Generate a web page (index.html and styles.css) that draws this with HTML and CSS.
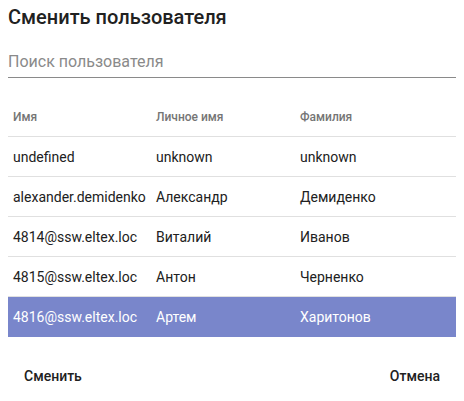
FILE: index.html
```html
<!DOCTYPE html>
<html lang="ru">
<head>
<meta charset="utf-8">
<link rel="stylesheet" href="styles.css">
</head>
<body>
<div class="dialog">
  <div class="content">
    <h1 class="title">Сменить пользователя</h1>
    <input class="search" type="text" placeholder="Поиск пользователя">
    <div class="table">
      <div class="row head"><div class="cell">Имя</div><div class="cell">Личное имя</div><div class="cell">Фамилия</div></div>
      <div class="row"><div class="cell">undefined</div><div class="cell">unknown</div><div class="cell">unknown</div></div>
      <div class="row"><div class="cell">alexander.demidenko</div><div class="cell">Александр</div><div class="cell">Демиденко</div></div>
      <div class="row"><div class="cell">4814@ssw.eltex.loc</div><div class="cell">Виталий</div><div class="cell">Иванов</div></div>
      <div class="row"><div class="cell">4815@ssw.eltex.loc</div><div class="cell">Антон</div><div class="cell">Черненко</div></div>
      <div class="row selected"><div class="cell">4816@ssw.eltex.loc</div><div class="cell">Артем</div><div class="cell">Харитонов</div></div>
    </div>
  </div>
  <div class="actions">
    <button class="btn" type="button">Сменить</button>
    <button class="btn" type="button">Отмена</button>
  </div>
</div>
</body>
</html>
```
FILE: styles.css
```css
html, body {
  margin: 0;
  padding: 0;
  background: #ffffff;
}
body {
  font-family: Roboto, "Noto Sans", sans-serif;
  color: #212121;
}
.dialog {
  width: 464px;
}
.content {
  padding: 5px 8px 0;
}
.title {
  margin: 0;
  font-size: 20px;
  line-height: 24px;
  font-weight: 500;
  color: #212121;
}
.search {
  display: block;
  box-sizing: content-box;
  width: 100%;
  height: 20px;
  margin: 19px 0 0;
  padding: 4px 0 5px;
  border: 0;
  border-bottom: 1px solid #8a8a8a;
  outline: none;
  font-family: Roboto, "Noto Sans", sans-serif;
  font-size: 16px;
  line-height: 20px;
  color: #212121;
  background: transparent;
}
.search::placeholder {
  color: #8a8a8a;
  opacity: 1;
}
.table {
  margin-top: 19px;
}
.row {
  display: grid;
  grid-template-columns: 143px 144px 1fr;
  height: 40px;
  box-sizing: border-box;
  border-bottom: 1px solid #e0e0e0;
  align-items: center;
  font-size: 14px;
  color: #212121;
}
.row.head {
  font-size: 12px;
  font-weight: 500;
  color: #757575;
}
.row.selected {
  background: #7986cb;
  border-bottom-color: #7986cb;
  color: #ffffff;
}
.cell {
  padding-left: 5px;
  white-space: nowrap;
}
.actions {
  display: flex;
  justify-content: space-between;
  padding: 0 8px;
  margin-top: 21px;
}
.btn {
  height: 36px;
  padding: 0 16px;
  border: 0;
  background: transparent;
  font-family: Roboto, "Noto Sans", sans-serif;
  font-size: 14px;
  font-weight: 500;
  line-height: 36px;
  color: #212121;
  cursor: pointer;
}
```
